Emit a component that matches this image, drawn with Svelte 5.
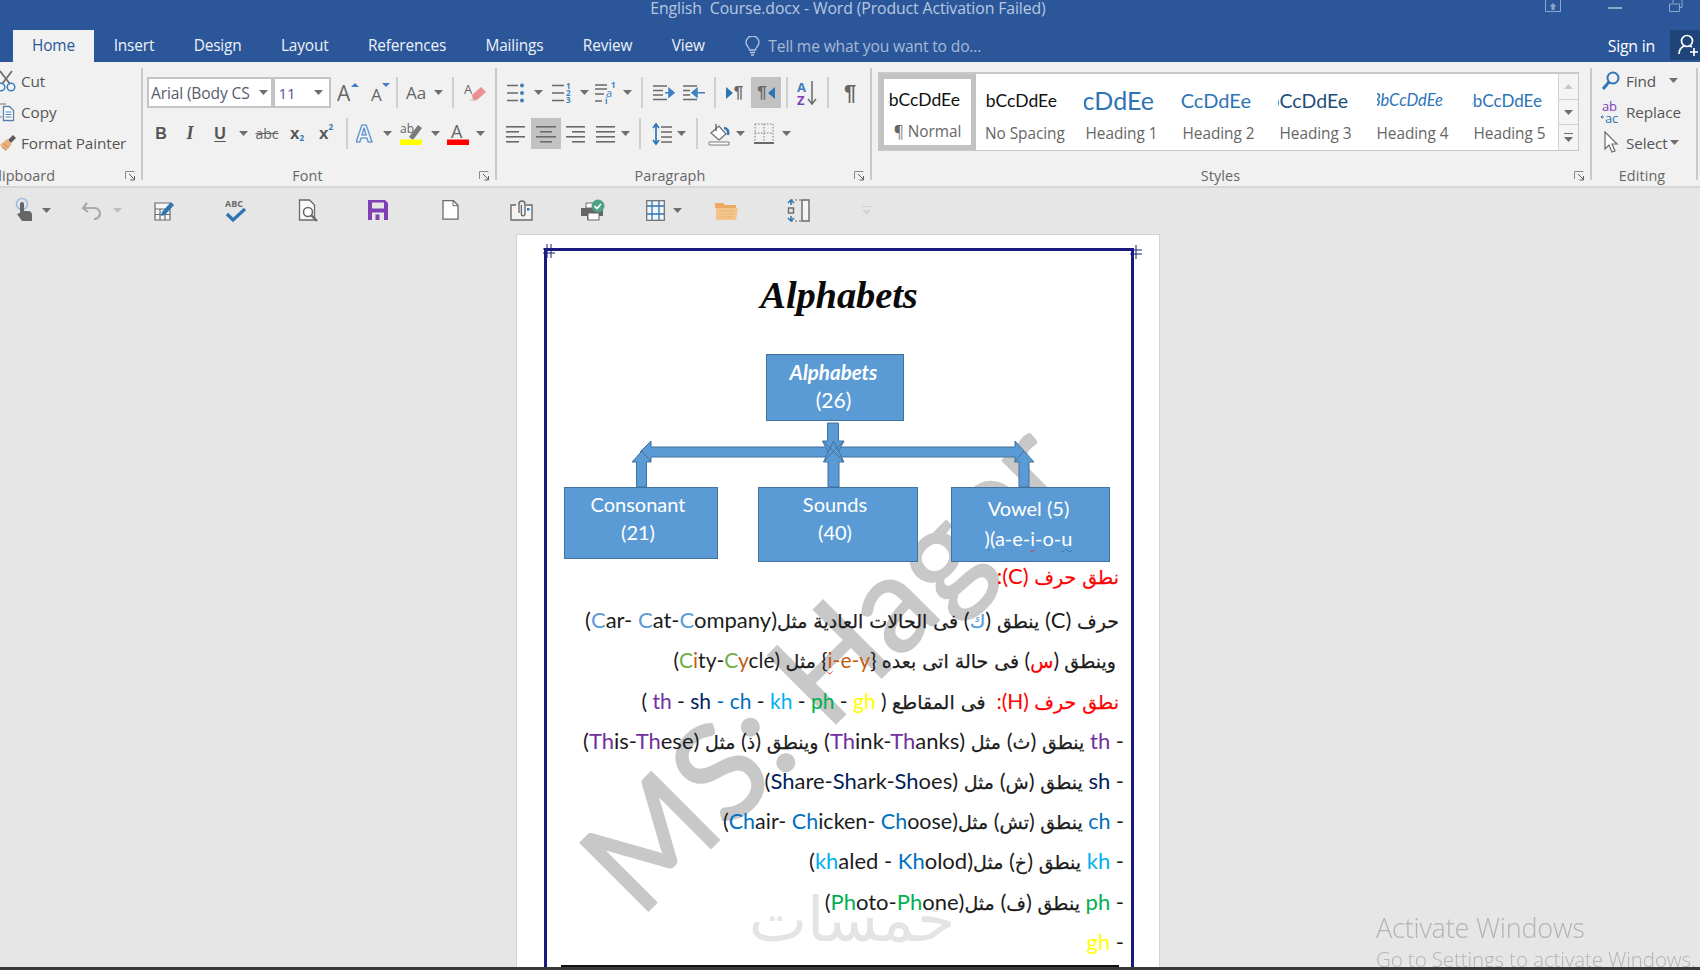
<script>
  const tabs = ['Insert', 'Design', 'Layout', 'References', 'Mailings', 'Review', 'View'];
  const styles = [
    { cls: 'normal', label: '¶ Normal' },
    { cls: 'nospace', label: 'No Spacing' },
    { cls: 'h1', label: 'Heading 1' },
    { cls: 'h2', label: 'Heading 2' },
    { cls: 'h3', label: 'Heading 3' },
    { cls: 'h4', label: 'Heading 4' },
    { cls: 'h5', label: 'Heading 5' }
  ];
</script>

{#snippet caret()}
  <svg class="caret" width="9" height="5" viewBox="0 0 9 5"><path d="M0 0h9L4.500 5z" fill="#6e6e6e" /></svg>
{/snippet}

{#snippet launcher()}
  <svg class="launch" width="11" height="10" viewBox="0 0 11 10">
    <path d="M.5 8V.5h9" fill="none" stroke="#8a8a8a" />
    <path d="M4 3l5 5M9.500 5v4h-4" fill="none" stroke="#5f5f5f" />
  </svg>
{/snippet}

{#snippet lines(ws)}
  <svg width="20" height="20" viewBox="0 0 20 20">
    {#each ws as [x, w], i}
      <rect x={x} y={2 + i * 5} width={w} height="1.6" fill="#6a6a6a" />
    {/each}
  </svg>
{/snippet}

<div class="app">
  <header class="titlebar">
    <span class="title">English&nbsp; Course.docx - Word (Product Activation Failed)</span>
    <div class="winctl">
      <svg width="16" height="12" viewBox="0 0 16 12"><path d="M.5 0v11.500h15V0" fill="none" stroke="#8da6cc" /><path d="M8 3l3.500 3.500h-2V10h-3V6.500h-2z" fill="#8da6cc" /></svg>
      <svg width="14" height="12" viewBox="0 0 14 12"><rect y="7" width="14" height="2" fill="#8da6cc" /></svg>
      <svg width="16" height="12" viewBox="0 0 16 12"><path d="M.5 4v7.500h10V4zM4 3V0M13 0v7.500h-2" fill="none" stroke="#8da6cc" /></svg>
    </div>
  </header>

  <nav class="tabbar">
    <span class="tab active">Home</span>
    {#each tabs as t}
      <span class="tab">{t}</span>
    {/each}
    <svg class="bulb" width="15" height="20" viewBox="0 0 15 20">
      <path d="M4.500 14c0-2.500-3.500-4-3.500-7.500a6.500 6.500 0 0 1 13 0c0 3.500-3.500 5-3.500 7.500zM5 16.500h5M6 19h3" fill="none" stroke="#b6c6df" stroke-width="1.300" />
    </svg>
    <span class="tell">Tell me what you want to do...</span>
    <span class="signin">Sign in</span>
    <span class="avatar">
      <svg width="24" height="24" viewBox="0 0 24 24">
        <circle cx="10" cy="8" r="5.500" fill="none" stroke="#fff" stroke-width="1.700" />
        <path d="M2 21c0-4 3-7 5-8M13 13l2 1M17 15v8M13 19h8" fill="none" stroke="#fff" stroke-width="1.700" />
      </svg>
    </span>
  </nav>

  <section class="ribbon">
    <div class="group clip">
      <div class="stack">
        <div class="cmd">
          <svg class="clipic" width="17" height="22" viewBox="0 0 17 22">
            <path d="M0 1l10 13M12 1L2 14" stroke="#6e6e6e" stroke-width="1.800" fill="none" />
            <circle cx="1" cy="17" r="3.800" fill="none" stroke="#3f7fc1" stroke-width="1.500" />
            <circle cx="11" cy="17" r="3.800" fill="none" stroke="#3f7fc1" stroke-width="1.500" />
          </svg>
          <span>Cut</span>
        </div>
        <div class="cmd">
          <svg class="clipic" width="17" height="22" viewBox="0 0 17 22">
            <path d="M0 3h6M0 16h2" stroke="#777" fill="none" />
            <path d="M3.500 5.500h6l4 4v10h-10z" fill="#fff" stroke="#5a7fa8" stroke-width="1.300" />
            <path d="M5.500 11h6M5.500 13.500h6M5.500 16h6" stroke="#3f7fc1" />
          </svg>
          <span>Copy</span>
        </div>
        <div class="cmd">
          <svg class="clipic" width="17" height="22" viewBox="0 0 17 22">
            <path d="M8 8l5-5 3 3-5 5z" fill="#5a5a5a" />
            <path d="M0 13l7-6 5 5-6 7z" fill="#e8b07a" />
            <path d="M2 15l4 3M4 12l5 4" stroke="#c98a4f" />
          </svg>
          <span>Format Painter</span>
        </div>
      </div>
      <div class="glabel clipl"><span></span><b>Clipboard</b>{@render launcher()}</div>
    </div>
    <i class="gsep"></i>

    <div class="group font">
      <div class="rows">
        <div class="row font1">
          <div class="combo fontname"><span class="fn">Arial (Body CS</span>{@render caret()}</div>
          <div class="combo fontsize"><span class="v">11</span>{@render caret()}</div>
          <svg width="24" height="26" viewBox="0 0 24 26">
            <text x="0" y="21" class="ug" font-size="21">A</text><path d="M14 7l4-4 4 4z" fill="#3f7fc1" />
          </svg>
          <svg width="22" height="26" viewBox="0 0 22 26">
            <text x="1" y="21" class="ug" font-size="17">A</text><path d="M12 3h8l-4 4z" fill="#3f7fc1" />
          </svg>
          <i class="sep"></i>
          <span class="aa">Aa</span>
          {@render caret()}
          <i class="sep"></i>
          <svg width="22" height="24" viewBox="0 0 22 24">
            <text x="0" y="13" class="ug" font-size="13">A</text>
            <path d="M8 14l9-8 5 5-9 8-4 1z" fill="#ec8f8f" /><path d="M5 19l6 0" stroke="#ccc" />
          </svg>
        </div>
        <div class="row font2">
          <b class="fmt">B</b>
          <b class="fmt it">I</b>
          <b class="fmt un">U</b>
          {@render caret()}
          <span class="abc">abc</span>
          <span class="xs"><b>x</b><sub>2</sub></span>
          <span class="xs"><b>x</b><sup>2</sup></span>
          <i class="sep"></i>
          <svg width="22" height="24" viewBox="0 0 22 24">
            <text x="0" y="20" font-size="23" font-weight="700" fill="#f4f8fd" stroke="#4a84c4" stroke-width="1.100" class="sans">A</text>
          </svg>
          {@render caret()}
          <svg width="24" height="24" viewBox="0 0 24 24">
            <text x="0" y="11" class="ug" font-size="12">ab</text>
            <path d="M9 15l9-12 4 3-9 12z" fill="#7a7a7a" /><rect y="17.500" width="22" height="5.500" fill="#ff0" />
          </svg>
          {@render caret()}
          <svg width="24" height="24" viewBox="0 0 24 24">
            <text x="5" y="16" class="ug" font-size="18">A</text><rect x="1" y="17.500" width="22" height="5.500" fill="#f00" />
          </svg>
          {@render caret()}
        </div>
      </div>
      <div class="glabel"><span></span><b>Font</b>{@render launcher()}</div>
    </div>
    <i class="gsep"></i>

    <div class="group para">
      <div class="rows">
        <div class="row para1">
          <svg width="20" height="22" viewBox="0 0 20 22">
            <path d="M1 3.500h11M1 11h11M1 18.500h11" stroke="#6a6a6a" stroke-width="1.700" />
            <circle cx="16" cy="3.500" r="2" fill="#3f7fc1" /><circle cx="16" cy="11" r="2" fill="#3f7fc1" /><circle cx="16" cy="18.500" r="2" fill="#3f7fc1" />
          </svg>
          {@render caret()}
          <svg width="22" height="22" viewBox="0 0 22 22">
            <path d="M1 3.500h12M1 11h12M1 18.500h12" stroke="#6a6a6a" stroke-width="1.700" />
            <text x="15" y="7" class="nb">1</text><text x="15" y="14" class="nb">2</text><text x="15" y="21" class="nb">3</text>
          </svg>
          {@render caret()}
          <svg width="24" height="24" viewBox="0 0 24 24">
            <path d="M1 4h12M1 8h12M1 13h9M1 20h7" stroke="#6a6a6a" stroke-width="1.500" />
            <text x="17" y="7" class="nb">1</text>
            <text x="12" y="16" font-size="11" fill="#3f7fc1">a</text>
            <text x="11" y="23" class="nb">i</text>
          </svg>
          {@render caret()}
          <i class="sep"></i>
          <svg width="24" height="20" viewBox="0 0 24 20">
            <path d="M1 3h14M1 7.500h10M1 12h10M1 16.500h14" stroke="#6a6a6a" stroke-width="1.500" />
            <path d="M13 9.700h7M17 5.500l5 4.200-5 4.200z" fill="#3f7fc1" stroke="#3f7fc1" stroke-width="1.500" />
          </svg>
          <svg width="24" height="20" viewBox="0 0 24 20">
            <path d="M1 3h14M1 7.500h7M1 12h7M1 16.500h14" stroke="#6a6a6a" stroke-width="1.500" />
            <path d="M16 9.700h7M15 5.500l-5 4.200 5 4.200z" fill="#3f7fc1" stroke="#3f7fc1" stroke-width="1.500" />
          </svg>
          <i class="sep"></i>
          <span class="pil"><svg width="7" height="12" viewBox="0 0 7 12"><path d="M0 0l7 6-7 6z" fill="#2f75b5" /></svg>¶</span>
          <span class="pil on">¶<svg width="7" height="12" viewBox="0 0 7 12"><path d="M7 0L0 6l7 6z" fill="#2f75b5" /></svg></span>
          <i class="sep"></i>
          <svg width="22" height="26" viewBox="0 0 22 26">
            <text x="0" y="12" font-size="13" fill="#3f7fc1" class="sans" font-weight="700">A</text>
            <text x="0" y="25" font-size="13" fill="#7f3fb5" class="sans" font-weight="700">Z</text>
            <path d="M15 1v22M11 19l4 5 4-5" fill="none" stroke="#6a6a6a" stroke-width="1.500" />
          </svg>
          <i class="sep"></i>
          <span class="pilb">¶</span>
        </div>
        <div class="row para2">
          {@render lines([[0, 19], [0, 13], [0, 19], [0, 13]])}
          <span class="on cell">{@render lines([[0, 20], [4, 12], [0, 20], [4, 12]])}</span>
          {@render lines([[0, 19], [6, 13], [0, 19], [6, 13]])}
          {@render lines([[0, 19], [0, 19], [0, 19], [0, 19]])}
          {@render caret()}
          <i class="sep"></i>
          <svg width="21" height="24" viewBox="0 0 21 24">
            <path d="M9 5h11M9 10h11M9 15h11M9 20h11" stroke="#6a6a6a" stroke-width="1.500" />
            <path d="M4 2v20M1 6l3-4 3 4M1 18l3 4 3-4" fill="none" stroke="#2f75b5" stroke-width="1.700" />
          </svg>
          {@render caret()}
          <i class="sep"></i>
          <svg width="24" height="24" viewBox="0 0 24 24">
            <path d="M2 20h20v3H2z" fill="#fff" stroke="#7a7a7a" />
            <path d="M4 11l8-7 7 8-7 6z" fill="#fff" stroke="#6a6a6a" stroke-width="1.200" />
            <path d="M9 2v7" stroke="#6a6a6a" stroke-width="1.500" />
            <path d="M17 6c3 0 5 3 4 7" fill="none" stroke="#2f75b5" stroke-width="2.500" />
          </svg>
          {@render caret()}
          <svg width="20" height="22" viewBox="0 0 20 22">
            <path d="M1 1h18M1 10h18M10 1v18M1 1v18M19 1v18" stroke="#808080" stroke-dasharray="1.500 1.500" fill="none" />
            <path d="M0 20h20" stroke="#6a6a6a" stroke-width="2" />
          </svg>
          {@render caret()}
        </div>
      </div>
      <div class="glabel"><span></span><b>Paragraph</b>{@render launcher()}</div>
    </div>
    <i class="gsep"></i>

    <div class="group sty">
      <div class="gallery">
        {#each styles as s}
          <div class="style {s.cls}">
            <div class="prev"><span>AaBbCcDdEe</span></div>
            <div class="slabel">{s.label}</div>
          </div>
        {/each}
        <div class="gscroll">
          <span><svg width="9" height="5" viewBox="0 0 9 5"><path d="M0 5h9L4.500 0z" fill="#c8c8c8" /></svg></span>
          <span>{@render caret()}</span>
          <span><svg width="9" height="9" viewBox="0 0 9 9"><path d="M0 .5h9" stroke="#6e6e6e" /><path d="M0 4h9L4.500 9z" fill="#6e6e6e" /></svg></span>
        </div>
      </div>
      <div class="glabel"><span></span><b>Styles</b>{@render launcher()}</div>
    </div>
    <i class="gsep"></i>

    <div class="group edit">
      <div class="stack">
        <div class="cmd">
          <svg width="20" height="22" viewBox="0 0 20 22">
            <circle cx="12" cy="8" r="5.500" fill="none" stroke="#2f75b5" stroke-width="2" />
            <path d="M8 12l-6 7" stroke="#2f75b5" stroke-width="3" />
          </svg>
          <span>Find</span>
          <span class="ec">{@render caret()}</span>
        </div>
        <div class="cmd">
          <svg width="20" height="24" viewBox="0 0 20 24">
            <text x="1" y="11" font-size="13" fill="#7f3fb5" class="sans">ab</text>
            <text x="4" y="23" font-size="13" fill="#2f75b5" class="sans">ac</text>
            <path d="M0 17h3M1.500 15.500L0 17l1.500 1.500" stroke="#2f75b5" fill="none" />
          </svg>
          <span>Replace</span>
        </div>
        <div class="cmd">
          <svg width="20" height="24" viewBox="0 0 20 24">
            <path d="M4 1v17l4-4 3 7 3-1-3-7h5z" fill="#fff" stroke="#6a6a6a" stroke-width="1.200" />
          </svg>
          <span class="sel">Select</span>
          <span>{@render caret()}</span>
        </div>
      </div>
      <div class="glabel editl"><b>Editing</b></div>
    </div>
    <i class="gsep"></i>
  </section>

  <section class="qat">
    <svg width="20" height="26" viewBox="0 0 20 26">
      <circle cx="8" cy="7" r="5.500" fill="none" stroke="#9dbfe0" stroke-width="1.600" />
      <path d="M6 7a2 2 0 0 1 4 0v7h4c3 0 4 2 4 4v6H8l-5-7 3-1z" fill="#666" />
    </svg>
    {@render caret()}
    <i></i>
    <svg width="22" height="20" viewBox="0 0 22 20">
      <path d="M6 3L2 8l5 4" fill="none" stroke="#a9a9a9" stroke-width="2.200" />
      <path d="M3 8h10c4 0 6 3 6 5.500S17 19 13 19" fill="none" stroke="#a9a9a9" stroke-width="2.200" />
    </svg>
    <svg width="9" height="5" viewBox="0 0 9 5"><path d="M0 0h9L4.500 5z" fill="#bdbdbd" /></svg>
    <svg width="22" height="22" viewBox="0 0 22 22">
      <path d="M1 4h15v17H1zM1 10h15M1 15.500h15M6 10v11M11 10v11" fill="#f6f6f6" stroke="#6a6a6a" stroke-width="1.200" />
      <path d="M8 13l9-10 3 3-9 10-4 1z" fill="#2f75b5" />
    </svg>
    <svg width="22" height="24" viewBox="0 0 22 24">
      <text x="0" y="9" font-size="9" font-weight="700" fill="#6a6a6a" class="sans">ABC</text>
      <path d="M2 16l6 6L20 11" fill="none" stroke="#2f75b5" stroke-width="3.200" />
    </svg>
    <svg width="21" height="23" viewBox="0 0 21 23">
      <path d="M1.500 1h10l5 5v15h-15z" fill="#fafafa" stroke="#6a6a6a" stroke-width="1.300" />
      <circle cx="10" cy="13" r="4.500" fill="#fff" stroke="#6a6a6a" stroke-width="1.600" />
      <path d="M13 16l6 6" stroke="#6a6a6a" stroke-width="2.400" />
    </svg>
    <svg width="20" height="20" viewBox="0 0 20 20">
      <path d="M0 0h17l3 3v17H0z" fill="#7f3fb5" />
      <rect x="4" y="2.500" width="12" height="6" fill="#e6e6e6" />
      <rect x="4" y="12.500" width="12" height="7.500" fill="#e6e6e6" />
      <rect x="7.500" y="14.500" width="4" height="5.500" fill="#7f3fb5" />
    </svg>
    <svg width="17" height="20" viewBox="0 0 17 20">
      <path d="M1 .7h10.500l4.500 4.500v14H1z" fill="#fff" stroke="#6a6a6a" stroke-width="1.300" />
      <path d="M11 .7v5h5" fill="none" stroke="#6a6a6a" />
    </svg>
    <svg width="23" height="22" viewBox="0 0 23 22">
      <path d="M6 6H1v15h21V6h-6" fill="#f4f4f4" stroke="#6a6a6a" stroke-width="1.400" />
      <path d="M9 14V5a3 3 0 0 1 6 0v10a1.800 1.800 0 0 1-3.600 0V6" fill="none" stroke="#6a6a6a" stroke-width="1.400" />
      <rect x="17" y="9" width="2.500" height="2.500" fill="#2f75b5" />
    </svg>
    <svg width="24" height="22" viewBox="0 0 24 22">
      <path d="M5 4h8v5H5z" fill="#fff" stroke="#6a6a6a" />
      <path d="M0 9h22v8H18v4H6v-4H0z" fill="#666" />
      <rect x="7" y="14" width="11" height="7" fill="#fff" stroke="#666" />
      <circle cx="17" cy="7" r="6.500" fill="#4fa283" />
      <path d="M13.500 7l2.500 2.500 4-4.500" fill="none" stroke="#fff" stroke-width="1.600" />
    </svg>
    <svg width="19" height="21" viewBox="0 0 19 21">
      <rect x=".7" y=".7" width="17.600" height="19.600" fill="#f2f6fb" stroke="#6a6a6a" stroke-width="1.200" />
      <path d="M1 6h17M1 14h17M6 1v19M13 1v19" stroke="#2f75b5" stroke-width="1.300" />
    </svg>
    {@render caret()}
    <svg width="23" height="19" viewBox="0 0 23 19">
      <path d="M0 2h8l2 2h11v3H0z" fill="#eba963" />
      <path d="M1 7h22l-2 12H1z" fill="#f3c48c" />
      <path d="M5 10h15M4 13h15M4 16h15" stroke="#e6ad4c" stroke-dasharray="1.500 1.500" />
    </svg>
    <svg width="23" height="23" viewBox="0 0 23 23">
      <path d="M15 1h7v21h-7z" fill="#f4f4f4" stroke="#6a6a6a" stroke-width="1.400" />
      <path d="M4 1h10M4 22h10" stroke="#6a6a6a" stroke-dasharray="2 2" />
      <path d="M4 1v5M1 4l3-3 3 3M4 22v-5M1 19l3 3 3-3" fill="none" stroke="#2f75b5" stroke-width="1.500" />
      <rect x="1.500" y="9" width="5" height="5" fill="none" stroke="#6a6a6a" stroke-width="1.400" />
    </svg>
    <svg width="9" height="9" viewBox="0 0 9 9"><path d="M0 .5h9" stroke="#d0d0d0" /><path d="M0 4h9L4.500 9z" fill="#d4d4d4" /></svg>
  </section>

  <main class="docarea">
    <article class="page">
      <div class="wmark">MS: Hager</div>
      <div class="khamsat">خمسات</div>
      <svg class="tmark tl" width="12" height="14" viewBox="0 0 12 14"><path d="M4 0v14M8 0v14M0 5h12M0 9h12" stroke="#1a1a80" fill="none" /></svg>
      <svg class="tmark tr" width="12" height="14" viewBox="0 0 12 14"><path d="M0 5h12M0 9h12M6 0v14" stroke="#1a1a80" fill="none" /></svg>

      <div class="frame">
        <h1>Alphabets</h1>

        <div class="diagram">
          <svg class="arrows" width="590" height="206" viewBox="547 354 590 206">
            <g fill="#5b9bd5" stroke="#41719c" stroke-width="1">
              <path d="M651 447h182v10H651v5l-11-10 11-11z" />
              <path d="M1015 447H833v10h182v5l10-10-10-11z" />
              <path d="M636.500 487v-25H632l10-11 9 11h-4.500v25z" />
              <path d="M1019 487v-25h-4.500l9.500-11 10 11h-5v25z" />
              <path d="M827.500 423h11v18h5.500l-11 21-10.500-21h5z" />
              <path d="M828 487v-25h-4.500l10-21 10.500 21h-5v25z" />
              <path d="M823 441l21 21M844 441l-21 21" fill="none" />
            </g>
          </svg>
          <div class="node root"><b>Alphabets</b><span>(26)</span></div>
          <div class="node cons"><span>Consonant</span><span>(21)</span></div>
          <div class="node sounds"><span>Sounds</span><span>(40)</span></div>
          <div class="node vowel"><span>Vowel (5)</span><span class="vl"><u class="wb">)</u>(a-e-<u class="wr">i</u>-o-<u class="wb">u</u></span></div>
        </div>

        <div class="text" dir="rtl">
          <p class="red l0"><span class="ar">نطق حرف</span> (C):</p>
          <p class="i1"><span class="ar">حرف</span> (C) <span class="ar">ينطق</span> (<span class="ar cb">ك</span>) <span class="ar">فى الحالات العادية مثل</span>(<span class="cb">C</span>ar- <span class="cb">C</span>at-<span class="cb">C</span>ompany)</p>
          <p class="i2"><span class="ar">وينطق</span> (<span class="ar cr">س</span>) <span class="ar">فى حالة اتى بعده</span> {'{'}<span class="co"><u class="wr">i</u>-e-y</span>{'}'} <span class="ar">مثل</span> (<span class="cg">C</span><span class="co">i</span>ty-<span class="cg">C</span><span class="co">y</span>cle)</p>
          <p class="l1"><span class="red"><span class="ar">نطق حرف</span> (H):</span>&nbsp; <span class="ar">فى المقاطع</span> ( <span class="pur">th</span> - <span class="nav">sh</span> <span class="bl">- ch</span> - <span class="cy">kh</span> - <span class="gr">ph</span> - <span class="ye">gh</span> )</p>
          <p>- <span class="pur">th</span> <span class="ar">ينطق</span> (<span class="ar">ث</span>) <span class="ar">مثل</span> (<span class="pur">Th</span>ink-<span class="pur">Th</span>anks) <span class="ar">وينطق</span> (<span class="ar">ذ</span>) <span class="ar">مثل</span> (<span class="pur">Th</span>is-<span class="pur">Th</span>ese)</p>
          <p>- <span class="nav">sh</span> <span class="ar">ينطق</span> (<span class="ar">ش</span>) <span class="ar">مثل</span> (<span class="nav">Sh</span>are-<span class="nav">Sh</span>ark-<span class="nav">Sh</span>oes)</p>
          <p class="l7">- <span class="bl">ch</span> <span class="ar">ينطق</span> (<span class="ar">تش</span>) <span class="ar">مثل</span>(<span class="bl">Ch</span>air- <span class="bl">Ch</span>icken- <span class="bl">Ch</span>oose)</p>
          <p>- <span class="cy">kh</span> <span class="ar">ينطق</span> (<span class="ar">خ</span>) <span class="ar">مثل</span>(<span class="cy">kh</span>aled - <span class="bl">Kh</span>olod)</p>
          <p>- <span class="gr">ph</span> <span class="ar">ينطق</span> (<span class="ar">ف</span>) <span class="ar">مثل</span>(<span class="gr">Ph</span>oto-<span class="gr">Ph</span>one)</p>
          <p>- <span class="ye">gh</span></p>
        </div>
        <div class="endline"></div>
      </div>
    </article>
    <div class="activate">
      <div class="a1">Activate Windows</div>
      <div class="a2">Go to Settings to activate Windows.</div>
    </div>
  </main>
  <div class="taskedge"></div>
</div>

<style>
  :global(body) { margin: 0; overflow: hidden; background: #e6e6e6; }
  .app {
    width: 1700px; height: 970px; overflow: hidden; position: relative;
    display: flex; flex-direction: column;
    font-family: "Open Sans", sans-serif; color: #444;
    filter: blur(0.35px);
  }
  .sans { font-family: "Open Sans", sans-serif; }
  svg { display: block; flex: none; }
  text { font-family: "Open Sans", sans-serif; }
  .ug { fill: #666; }
  .nb { font-size: 8px; font-weight: 700; fill: #3f7fc1; font-family: "Open Sans", sans-serif; }

  .titlebar { height: 30px; flex: none; background: #2b579a; position: relative; display: flex; justify-content: center; }
  .title { margin-left: -4px; font-size: 15.800px; line-height: 16px; height: 20px; color: #b9c8e0; letter-spacing: -.1px; white-space: nowrap; }
  .winctl { position: absolute; right: 15px; top: 0; display: flex; gap: 47px; }

  .tabbar { height: 32px; flex: none; background: #2b579a; display: flex; align-items: center; padding-left: 13px; position: relative; }
  .tab { color: #eef2f8; font-size: 15.400px; letter-spacing: -.15px; padding: 0 19.700px; line-height: 32px; height: 32px; white-space: nowrap; box-sizing: border-box; }
  .tab.active { background: #f1f1f1; color: #2b579a; width: 81px; padding: 0; text-align: center; }
  .bulb { margin-left: 21px; }
  .tell { color: #a8bad6; font-size: 15.600px; letter-spacing: -.15px; margin-left: 8px; white-space: nowrap; line-height: 30px; }
  .signin { color: #fff; font-size: 15.800px; letter-spacing: -.2px; margin-left: auto; margin-right: 15px; line-height: 30px; }
  .avatar { width: 30px; height: 30px; background: #1e4478; display: flex; align-items: center; padding-left: 7px; box-sizing: border-box; overflow: hidden; margin-top: -2px; }

  .ribbon { flex: none; background: #f1f1f1; display: flex; border-bottom: 2px solid #d6d6d6; box-sizing: border-box; height: 126px; overflow: hidden; }
  .group { display: flex; flex-direction: column; position: relative; box-sizing: border-box; height: 124px; flex: none; }
  .gsep { width: 2px; flex: none; background: #c8c8c8; height: 112px; margin-top: 6px; }
  .glabel { margin-top: auto; height: 22px; display: grid; grid-template-columns: 1fr auto 1fr; align-items: center; font-size: 14.400px; color: #666; padding-right: 5px; }
  .glabel b { font-weight: 400; letter-spacing: .1px; margin-right: 22px; }
  .para .glabel b { margin-right: 26px; }
  .launch { justify-self: end; margin-top: 2px; }

  .clip { width: 141px; overflow: hidden; }
  .clipl { grid-template-columns: auto 1fr; padding-left: 0; }
  .clipl span { display: none; }
  .clipl b { margin-left: -11px; margin-right: 0; }
  .stack { padding-top: 3px; display: flex; flex-direction: column; }
  .cmd { height: 31px; display: flex; align-items: center; font-size: 15.300px; letter-spacing: -.1px; color: #555; gap: 4px; white-space: nowrap; }

  .font { width: 352px; padding-left: 4px; }
  .para { width: 373px; padding-left: 4px; }
  .rows { padding-top: 15px; display: flex; flex-direction: column; gap: 10px; }
  .row { height: 31px; display: grid; align-items: center; justify-items: center; }
  .font1 { grid-template-columns: 126px 58px 36px 28px 4px 34px 10px 20px 24px; }
  .font2 { grid-template-columns: 28px 30px 30px 16px 32px 28px 30px 12px 28px 12px 37px 10px 36px 8px; }
  .para1 { grid-template-columns: 30px 14px 34px 10px 34px 9px 20px 24px 36px 6px 33px 30px 12px 30px 10px 34px; }
  .para2 { grid-template-columns: 30px 30px 30px 30px 8px 22px 22px 16px 16px 28px 14px 34px 10px; }
  .sep { width: 2px; height: 31px; background: #d0d0d0; display: block; }
  .combo { display: flex; justify-content: space-between; align-items: center; background: #fff; border: 2px solid #c4c4c4; box-sizing: border-box; height: 31px; width: 100%; padding: 0 3px 0 2px; font-size: 15.600px; letter-spacing: -.15px; }
  .fontname { overflow: hidden; }
  .fn { color: #565c6c; width: 103px; overflow: hidden; white-space: nowrap; }
  .v { color: #62509a; font-size: 15px; padding-left: 2px; }
  .fontsize { margin-left: -1px; padding-right: 6px; }
  .aa { font-size: 17px; color: #666; }
  .fmt { font-family: "Liberation Sans", sans-serif; font-size: 16px; color: #555; font-weight: 700; }
  .it { font-family: "Liberation Serif", serif; font-style: italic; font-size: 18px; }
  .un { text-decoration: underline; text-underline-offset: 2px; }
  .abc { font-size: 14px; color: #666; text-decoration: line-through; }
  .xs { font-size: 17px; color: #555; display: inline-flex; align-items: baseline; }
  .xs b { font-family: "Liberation Sans", sans-serif; }
  .xs sub, .xs sup { font-size: 8px; color: #2f75b5; font-weight: 700; line-height: 1; }
  .xs sub { transform: translateY(2px); }
  .xs sup { transform: translateY(-9px); }
  .pil { display: flex; align-items: center; gap: 1px; font-size: 17px; font-weight: 700; color: #666; font-family: "Liberation Sans", sans-serif; }
  .on { background: #c2c2c2; justify-self: stretch; align-self: stretch; justify-content: center; }
  .cell { display: flex; align-items: center; height: 31px; }
  .pilb { font-size: 22px; color: #666; font-family: "Liberation Sans", sans-serif; font-weight: 700; line-height: 1; }

  .sty { width: 718px; padding-left: 6px; }
  .gallery { margin-top: 10px; width: 701px; height: 79px; box-sizing: border-box; background: #fff; border: 1px solid #c8c8c8; border-top-width: 2px; display: flex; position: relative; }
  .style { width: 97px; flex: none; box-sizing: border-box; padding: 0 0 0 9px; text-align: left; }
  .style.normal { border: 5px solid #c2c2c2; height: 76px; padding-left: 4px; }
  .prev { width: 72px; height: 44px; overflow: hidden; display: flex; justify-content: flex-end; align-items: center; margin-top: 4px; font-family: Lato, sans-serif; font-size: 17.500px; color: #111; }
  .normal .prev { margin-top: -1px; height: 42px; }
  .prev span { flex: none; }
  .h1 .prev { font-size: 25px; color: #2e74b5; margin-left: 2px; width: 70px; }
  .h2 .prev { font-size: 20px; color: #2e74b5; margin-left: 2px; width: 70px; }
  .h3 .prev { font-size: 19.500px; color: #1f4d78; margin-left: 2px; width: 70px; }
  .h4 .prev { font-size: 16.500px; font-style: italic; color: #2e74b5; margin-left: 4px; width: 66px; }
  .h5 .prev { font-size: 17px; color: #2e74b5; margin-left: 2px; width: 70px; }
  .slabel { font-size: 15.400px; color: #666; letter-spacing: -.05px; white-space: nowrap; text-align: center; width: 79px; margin-top: 1px; }
  .gscroll { margin-left: auto; width: 19px; display: flex; flex-direction: column; border-left: 1px solid #d0d0d0; }
  .gscroll span { display: flex; align-items: center; justify-content: center; border-bottom: 1px solid #d0d0d0; height: 26px; background: #f4f4f4; }
  .gscroll span:last-child { border: 0; }

  .edit { width: 104px; padding-left: 9px; }
  .editl { grid-template-columns: 1fr; text-align: center; padding-right: 0; justify-items: center; margin-left: -13px; }
  .editl b { margin: 0; }
  .ec { margin-left: 8px; }
  .edit .cmd { gap: 5px; }
  .sel { margin-right: -3px; }

  .qat {
    height: 46px; flex: none; background: #e6e6e6; display: grid; align-items: center; justify-items: center; padding: 0 0 2px 8px; box-sizing: border-box;
    grid-template-columns: 32px 12px 20px 40px 10px 86px 56px 88px 52px 92px 50px 94px 30px 14px 84px 60px 76px;
  }

  .docarea { flex: 1; min-height: 0; padding-left: 516px; position: relative; }
  .page { width: 644px; height: 736px; background: #fff; box-sizing: border-box; border: 1px solid #d4d4d4; border-bottom: 0; position: relative; overflow: hidden; padding: 13px 0 0 27px; }
  .frame { width: 590px; height: 722px; box-sizing: border-box; border: 3px solid #1a1a80; border-bottom: 0; position: relative; }
  h1 { margin: 0; height: 103px; box-sizing: border-box; padding-top: 17px; text-align: center; font: italic 700 38.500px/54px "Liberation Serif", serif; color: #0a0a0a; letter-spacing: -.1px; }

  .wmark { position: absolute; left: -14px; top: 362px; width: 640px; text-align: center; font: 400 134px/1 Lato, sans-serif; -webkit-text-stroke: 2px #c8c8c8; color: #c8c8c8; transform: rotate(-45deg); white-space: nowrap; }
  .khamsat { position: absolute; left: 230px; top: 648px; width: 210px; text-align: center; font: 400 62px/1.2 "DejaVu Sans", sans-serif; color: #e4e4e4; }
  .tmark { position: absolute; z-index: 2; }
  .tl { left: 26px; top: 9px; }
  .tr { left: 613px; top: 10px; }

  .diagram { position: relative; height: 206px; font-family: Lato, sans-serif; }
  .arrows { position: absolute; left: 0; top: 0; }
  .node { position: absolute; box-sizing: border-box; background: #5b9bd5; border: 1.500px solid #41719c; color: #fff; display: flex; flex-direction: column; align-items: center; justify-content: center; font-size: 20px; line-height: 28px; }
  .root { left: 219px; top: 0; width: 138px; height: 67px; padding: 0 3px 3px 0; }
  .root b { font-style: italic; font-size: 20.500px; }
  .root span { font-size: 21px; }
  .cons { left: 17px; top: 133px; width: 154px; height: 72px; padding: 0 6px 10px 0; }
  .sounds { left: 211px; top: 133px; width: 160px; height: 75px; padding: 0 6px 14px 0; }
  .vowel { left: 404px; top: 133px; width: 159px; height: 75px; padding: 0 4px 3px 0; line-height: 30px; }
  .wb { text-decoration: underline wavy #2f75b5 1px; text-underline-offset: 2px; }
  .wr { text-decoration: underline wavy #e03030 1px; text-underline-offset: 2px; }

  .text { position: relative; font-family: Lato, "DejaVu Sans", sans-serif; font-size: 22px; color: #1c1c1c; padding-right: 7px; }
  .text p { margin: 0; height: 40.200px; line-height: 40.200px; white-space: nowrap; }
  .ar { font-family: "DejaVu Sans", sans-serif; font-size: 19px; -webkit-text-stroke: .25px currentColor; }
  .i1 { padding-right: 5px; }
  .i2 { padding-right: 8px; font-size: 21px; }
  .l1 { padding-right: 5px; font-size: 21px; }
  .l7 { font-size: 21.500px; }
  .text .l0 { padding-right: 5px; margin-top: -3px; height: 43.200px; line-height: 37.200px; }
  .red { color: #f00; }
  .cb { color: #5b9bd5; }
  .cr { color: #f00; }
  .cg { color: #70ad47; }
  .co { color: #c55a11; }
  .pur { color: #7030a0; }
  .nav { color: #002060; }
  .bl { color: #0070c0; }
  .cy { color: #00b0f0; }
  .gr { color: #00b050; }
  .ye { color: #ff0; }
  .endline { position: absolute; left: 14px; top: 714px; width: 558px; height: 3px; background: #111; }

  .activate { position: absolute; left: 1376px; top: 679px; color: #b4b4b4; white-space: nowrap; font-family: "Open Sans", sans-serif; }
  .a1 { font-size: 27px; line-height: 30px; font-weight: 300; letter-spacing: -.2px; }
  .a2 { font-size: 20.500px; line-height: 32px; font-weight: 300; letter-spacing: -.1px; }
  .taskedge { position: absolute; left: 0; right: 0; bottom: 0; height: 3px; background: #3a3a3a; z-index: 5; }
</style>
